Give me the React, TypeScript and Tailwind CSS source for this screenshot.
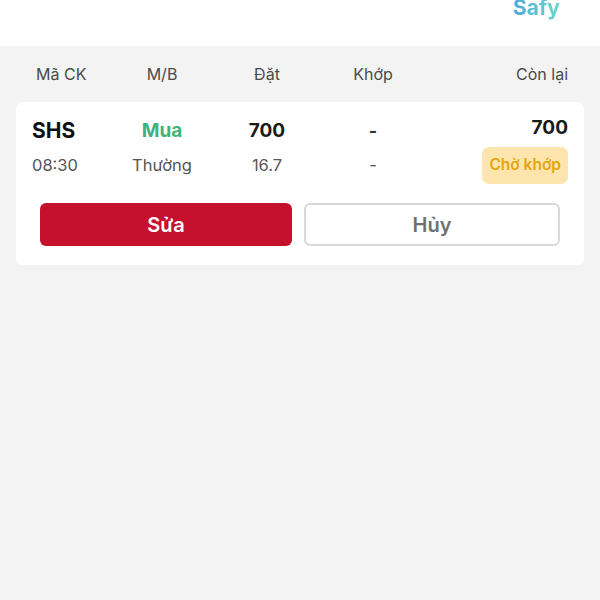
export default function App() {
  return (
    <div className="w-[600px] h-[600px] bg-[#f3f3f3] font-['Inter',sans-serif] overflow-hidden">
      {/* Top bar */}
      <div className="h-[46px] bg-white flex justify-end pr-[40px]">
        <span className="-mt-[8px] text-[21px] font-bold bg-gradient-to-r from-[#4fa8d8] to-[#6ad8c6] bg-clip-text text-transparent">
          Safy
        </span>
      </div>

      {/* Column headers */}
      <div className="h-[56px] mx-4 px-4 grid grid-cols-[80px_100px_110px_102px_1fr] items-center text-[16px] text-[#4a4a4a]">
        <div className="pl-1">Mã CK</div>
        <div className="text-center">M/B</div>
        <div className="text-center">Đặt</div>
        <div className="text-center">Khớp</div>
        <div className="text-right">Còn lại</div>
      </div>

      {/* Order card */}
      <div className="mx-4 bg-white rounded-[7px] pt-[13px] pb-[19px]">
        <div className="px-4 grid grid-cols-[80px_100px_110px_102px_1fr] items-center h-[28px]">
          <div className="text-[21px] font-bold text-[#111]">SHS</div>
          <div className="text-center text-[19px] font-bold text-[#3fb37a]">Mua</div>
          <div className="text-center text-[19px] font-bold text-[#1a1a1a]">700</div>
          <div className="text-center text-[18px] font-bold text-[#333]">-</div>
          <div className="text-right text-[19px] font-bold text-[#1a1a1a] -mt-[5px]">700</div>
        </div>
        <div className="px-4 mt-[3px] grid grid-cols-[80px_100px_110px_102px_1fr] items-center h-[38px] text-[16.5px] text-[#555]">
          <div>08:30</div>
          <div className="text-center">Thường</div>
          <div className="text-center">16.7</div>
          <div className="text-center">-</div>
          <div className="flex justify-end">
            <span className="h-[37px] px-[7px] flex items-center rounded-[7px] bg-[#fde5ad] text-[#e3a60e] text-[15.5px] font-semibold">
              Chờ khớp
            </span>
          </div>
        </div>
        <div className="mt-[19px] px-6 flex gap-3">
          <button className="flex-1 h-[43px] rounded-[6px] bg-[#c5112e] text-white text-[20px] font-semibold">
            Sửa
          </button>
          <button className="flex-1 h-[43px] rounded-[6px] border-2 border-[#d9d9d9] bg-white text-[#707070] text-[20px] font-semibold">
            Hủy
          </button>
        </div>
      </div>
    </div>
  );
}
